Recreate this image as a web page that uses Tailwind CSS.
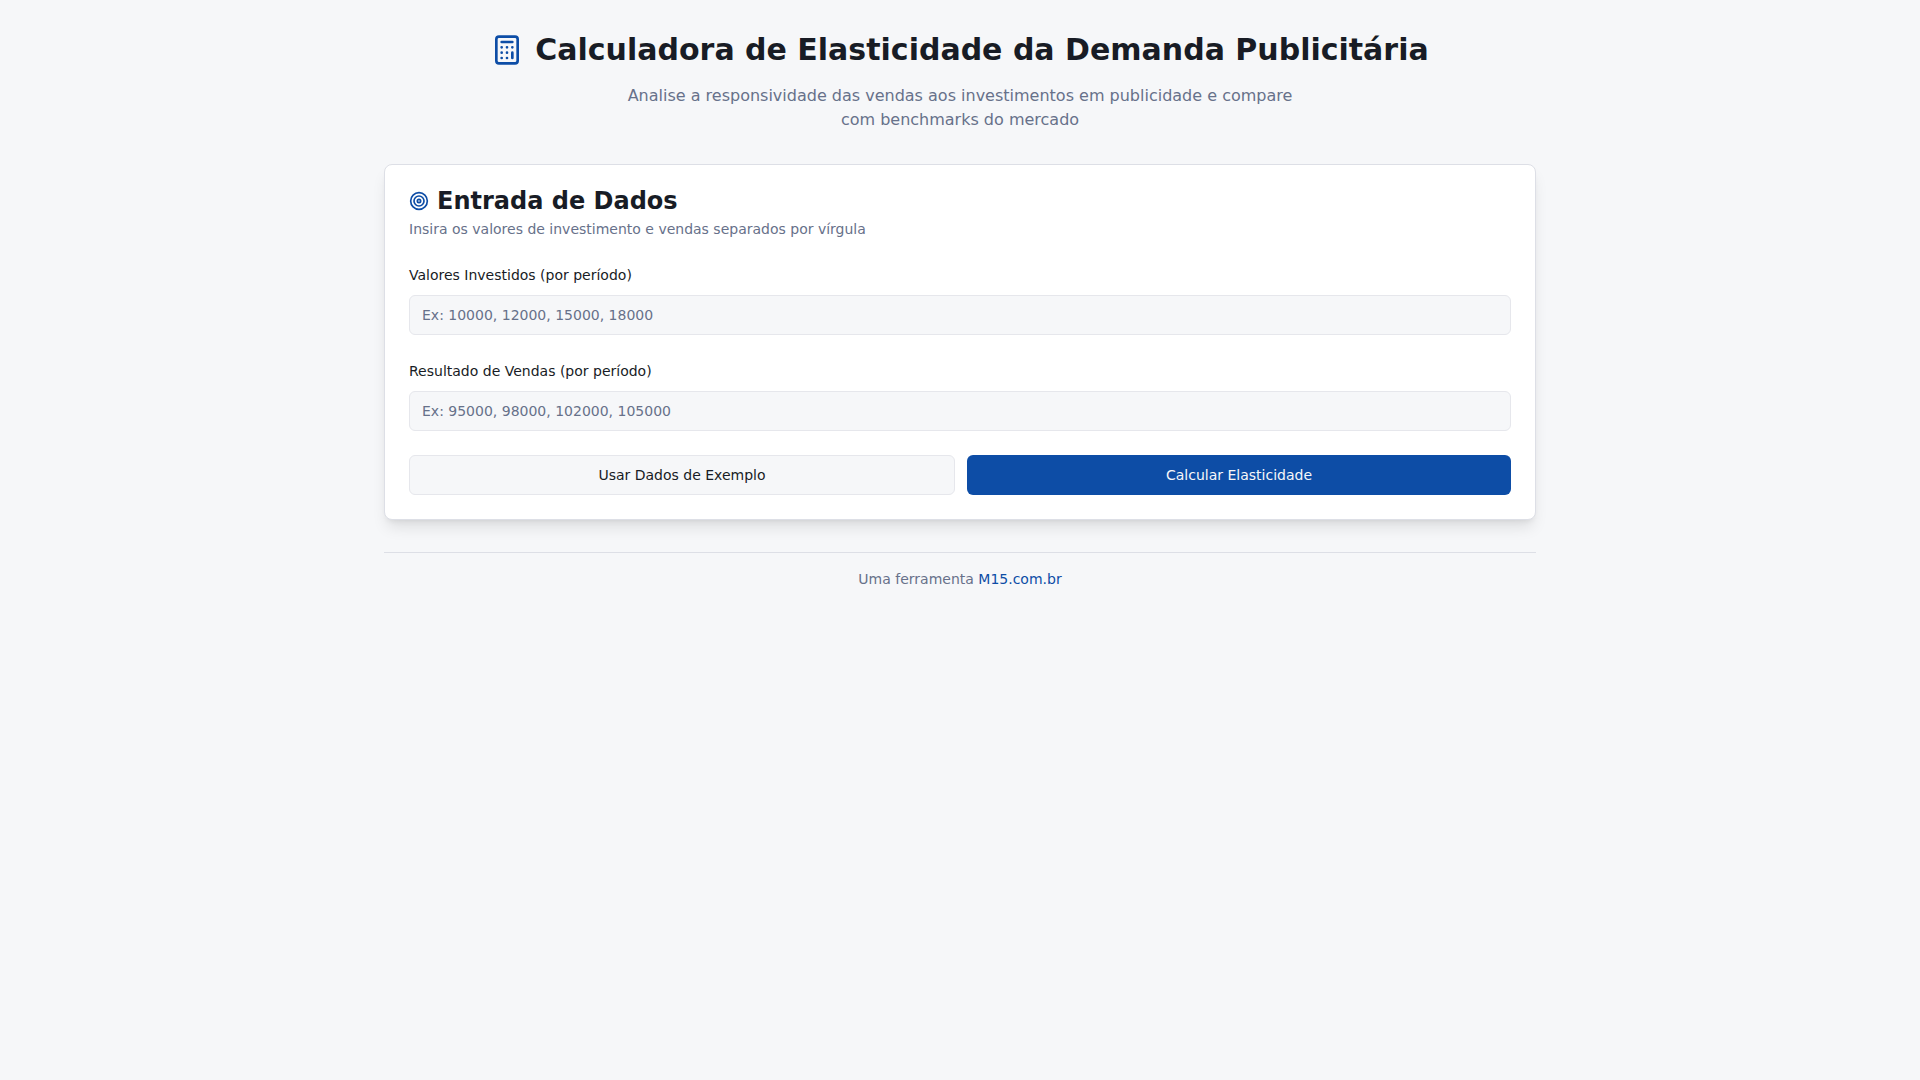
<!DOCTYPE html>
<html lang="pt-BR">
<head>
    <meta charset="UTF-8">
    <meta name="viewport" content="width=device-width, initial-scale=1.0">
    <title>Calculadora de Elasticidade da Demanda Publicitária</title>
    <script src="https://cdn.jsdelivr.net/npm/@tailwindcss/browser@4"></script>
</head>
<body class="min-h-screen bg-[#f6f7f9] font-['DejaVu_Sans',sans-serif] text-[#181c25]">
    <div class="max-w-6xl mx-auto py-8">
        <!-- Header -->
        <header class="text-center mb-8">
            <div class="flex items-center justify-center gap-3 mb-4">
                <svg class="w-8 h-8 shrink-0 text-[#0d4da6]" viewBox="0 0 24 24" fill="none" stroke="currentColor" stroke-width="2" stroke-linecap="round" stroke-linejoin="round" aria-hidden="true">
                    <rect width="16" height="20" x="4" y="2" rx="2"/>
                    <path d="M8 6h8M16 14v4M16 10h.01M12 10h.01M8 10h.01M12 14h.01M8 14h.01M12 18h.01M8 18h.01"/>
                </svg>
                <h1 class="text-3xl font-bold">Calculadora de Elasticidade da Demanda Publicitária</h1>
            </div>
            <p class="max-w-2xl mx-auto text-[#67718a]">Analise a responsividade das vendas aos investimentos em publicidade e compare com benchmarks do mercado</p>
        </header>

        <!-- Data entry -->
        <main class="bg-white border border-[#dddfe6] rounded-lg shadow-lg p-6">
            <div class="flex flex-col gap-1.5 mb-6">
                <h2 class="flex items-center gap-2 text-2xl leading-none font-bold">
                    <svg class="w-5 h-5 shrink-0 text-[#0d4da6]" viewBox="0 0 24 24" fill="none" stroke="currentColor" stroke-width="2" aria-hidden="true">
                        <circle cx="12" cy="12" r="10"/>
                        <circle cx="12" cy="12" r="6"/>
                        <circle cx="12" cy="12" r="2"/>
                    </svg>
                    Entrada de Dados
                </h2>
                <p class="text-sm text-[#67718a]">Insira os valores de investimento e vendas separados por vírgula</p>
            </div>

            <form id="elasticity-form" class="flex flex-col gap-6">
                <div class="flex flex-col gap-2">
                    <label for="investments" class="text-sm leading-6">Valores Investidos (por período)</label>
                    <input type="text" id="investments" placeholder="Ex: 10000, 12000, 15000, 18000"
                           class="h-10 w-full rounded-md border border-[#e6e7ec] bg-[#f6f7f9] px-3 text-sm placeholder:text-[#67718a] focus:outline-none focus:border-[#0d4da6]">
                </div>
                <div class="flex flex-col gap-2">
                    <label for="sales" class="text-sm leading-6">Resultado de Vendas (por período)</label>
                    <input type="text" id="sales" placeholder="Ex: 95000, 98000, 102000, 105000"
                           class="h-10 w-full rounded-md border border-[#e6e7ec] bg-[#f6f7f9] px-3 text-sm placeholder:text-[#67718a] focus:outline-none focus:border-[#0d4da6]">
                </div>
                <div class="flex gap-3">
                    <button type="button" id="example-btn" class="flex-1 h-10 px-4 rounded-md border border-[#e6e7ec] bg-[#f6f7f9] text-sm hover:bg-gray-200 transition-colors">Usar Dados de Exemplo</button>
                    <button type="submit" class="flex-1 h-10 px-4 rounded-md bg-[#0d4da6] text-sm text-[#f6f7f9] hover:bg-[#0d4da6]/90 transition-colors">Calcular Elasticidade</button>
                </div>
            </form>
        </main>

        <!-- Footer -->
        <footer class="mt-8 border-t border-[#dddfe6] py-4 text-center text-sm text-[#67718a]">
            Uma ferramenta <a href="https://m15.com.br" class="text-[#0d4da6] hover:underline">M15.com.br</a>
        </footer>
    </div>

    <script>
        const investments = document.getElementById('investments');
        const sales = document.getElementById('sales');

        document.getElementById('example-btn').addEventListener('click', () => {
            investments.value = '10000, 12000, 15000, 18000';
            sales.value = '95000, 98000, 102000, 105000';
        });

        document.getElementById('elasticity-form').addEventListener('submit', (e) => {
            e.preventDefault();
        });
    </script>
</body>
</html>
